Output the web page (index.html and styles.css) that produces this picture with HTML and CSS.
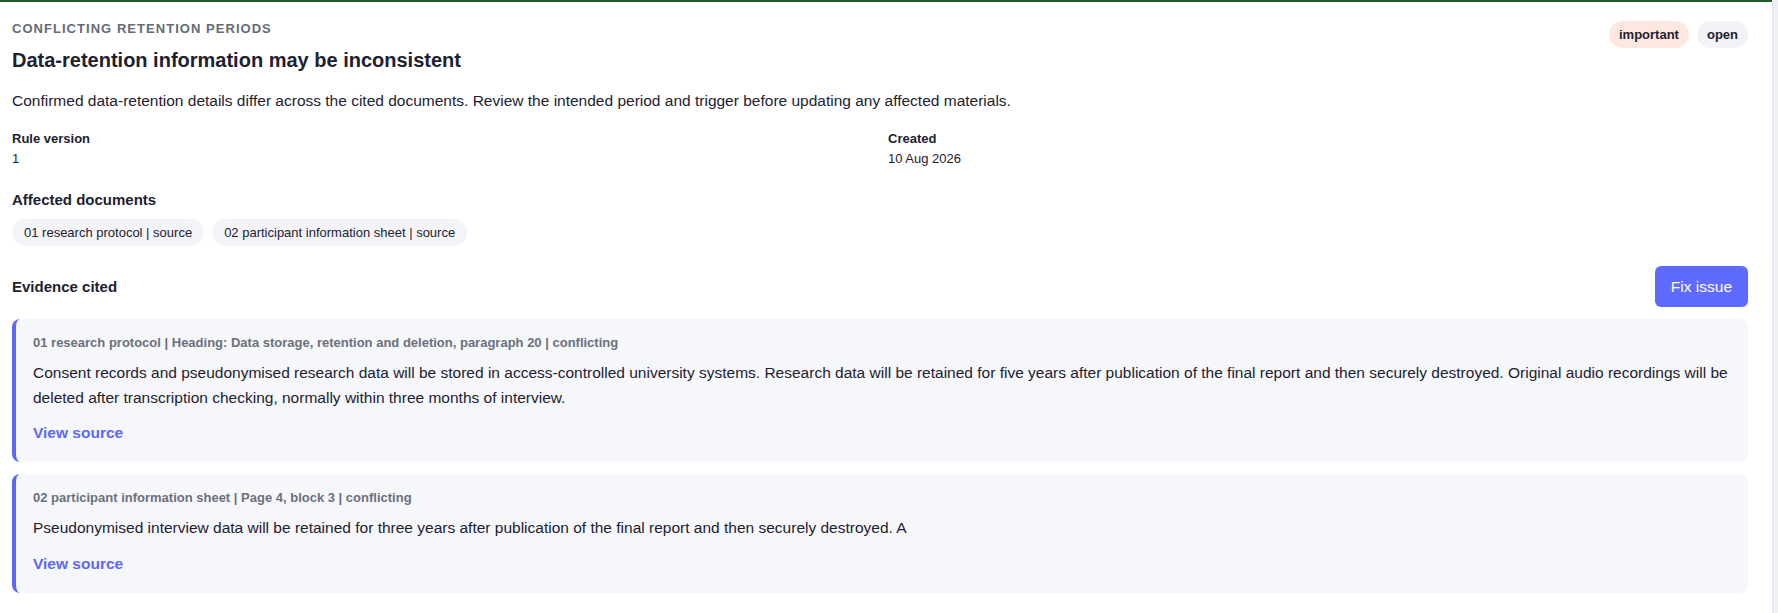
FILE: index.html
```html
<!DOCTYPE html>
<html lang="en">
<head>
    <meta charset="UTF-8">
    <meta name="viewport" content="width=device-width, initial-scale=1.0">
    <title>Issue detail</title>
    <link rel="stylesheet" href="styles.css">
</head>
<body>
    <div class="page">
        <main class="issue">
            <div class="issue-head">
                <div>
                    <div class="eyebrow">Conflicting retention periods</div>
                    <h1>Data-retention information may be inconsistent</h1>
                    <p class="summary">Confirmed data-retention details differ across the cited documents. Review the intended period and trigger before updating any affected materials.</p>
                </div>
                <div class="badges">
                    <span class="badge badge-important">important</span>
                    <span class="badge">open</span>
                </div>
            </div>

            <div class="meta">
                <div>
                    <div class="meta-label">Rule version</div>
                    <div class="meta-value">1</div>
                </div>
                <div>
                    <div class="meta-label">Created</div>
                    <div class="meta-value">10 Aug 2026</div>
                </div>
            </div>

            <h2>Affected documents</h2>
            <div class="chips">
                <span class="chip">01 research protocol | source</span>
                <span class="chip">02 participant information sheet | source</span>
            </div>

            <div class="evidence-head">
                <h2>Evidence cited</h2>
                <button class="fix-btn">Fix issue</button>
            </div>

            <div class="evidence">
                <div class="evidence-meta">01 research protocol | Heading: Data storage, retention and deletion, paragraph 20 | conflicting</div>
                <p>Consent records and pseudonymised research data will be stored in access-controlled university systems. Research data will be retained for five years after publication of the final report and then securely destroyed. Original audio recordings will be deleted after transcription checking, normally within three months of interview.</p>
                <a class="view-link" href="#">View source</a>
            </div>

            <div class="evidence">
                <div class="evidence-meta">02 participant information sheet | Page 4, block 3 | conflicting</div>
                <p>Pseudonymised interview data will be retained for three years after publication of the final report and then securely destroyed. A</p>
                <a class="view-link" href="#">View source</a>
            </div>
        </main>
        <div class="scroll-track"></div>
    </div>
</body>
</html>
```

FILE: styles.css
```css
* {
    box-sizing: border-box;
}
body {
    margin: 0;
    font-family: "Liberation Sans", Arial, sans-serif;
    color: #1d2130;
    background: #fff;
}
.page {
    display: flex;
    min-height: 100vh;
}
.issue {
    flex: 1;
    border-top: 2px solid #1f5e22;
    padding: 19px 24px 20px 12px;
}
.scroll-track {
    width: 6px;
    background: #eef0f6;
    border-left: 1px solid #e3e6ee;
}
.issue-head {
    display: flex;
    justify-content: space-between;
    align-items: flex-start;
}
.badges {
    display: flex;
    gap: 8px;
}
.eyebrow {
    font-size: 13px;
    line-height: 16px;
    font-weight: bold;
    text-transform: uppercase;
    letter-spacing: 0.08em;
    color: #646b78;
}
h1 {
    margin: 9px 0 0;
    font-size: 20px;
    line-height: 28px;
}
.summary {
    margin: 15px 0 0;
    font-size: 15.5px;
    line-height: 24px;
}
.badge {
    padding: 0 10px;
    height: 27px;
    line-height: 27px;
    border-radius: 14px;
    background: #f1f3f7;
    font-size: 13px;
    font-weight: bold;
}
.badge-important {
    background: #fde8df;
}
.meta {
    display: grid;
    grid-template-columns: 1fr 1fr;
    gap: 16px;
    margin-top: 16px;
    font-size: 13px;
    line-height: 20px;
}
.meta-label {
    font-weight: bold;
}
h2 {
    margin: 20px 0 0;
    font-size: 15px;
    line-height: 22px;
}
.chips {
    display: flex;
    gap: 8px;
    margin-top: 8px;
}
.chip {
    padding: 0 12px;
    height: 27px;
    line-height: 27px;
    border-radius: 14px;
    background: #f2f4f8;
    font-size: 13px;
}
.evidence-head {
    display: flex;
    justify-content: space-between;
    align-items: center;
    margin-top: 20px;
}
.evidence-head h2 {
    margin: 0;
}
.fix-btn {
    padding: 10px 16px;
    border: none;
    border-radius: 6px;
    background: #5f6bff;
    color: #fff;
    font-family: inherit;
    font-size: 15.5px;
    line-height: 21px;
    cursor: pointer;
}
.evidence {
    margin-top: 12px;
    padding: 15px 18px 17px 17px;
    background: #f6f7fb;
    border-left: 4px solid #5d68f6;
    border-radius: 8px;
}
.evidence-meta {
    font-size: 13px;
    line-height: 18px;
    font-weight: bold;
    color: #6b707d;
}
.evidence p {
    margin: 9px 0 0;
    font-size: 15.5px;
    line-height: 24.6px;
}
.view-link {
    display: block;
    margin-top: 11px;
    font-size: 15.5px;
    line-height: 24px;
    font-weight: bold;
    color: #5d68f6;
    text-decoration: none;
}
```
